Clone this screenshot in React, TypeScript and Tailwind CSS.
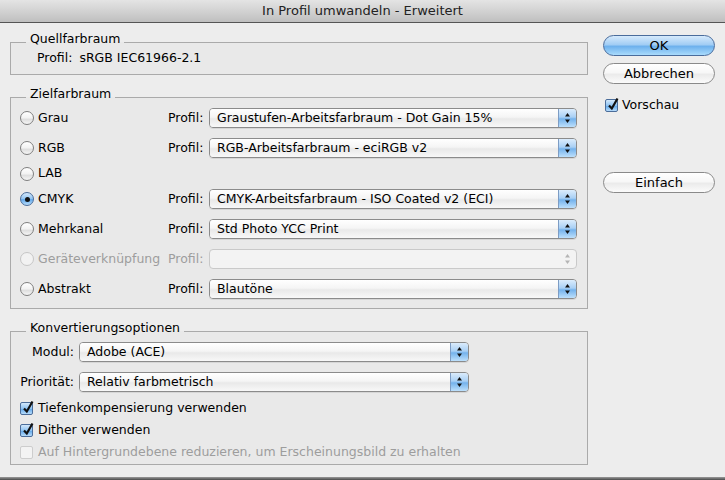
import React from "react";

function Arrows({ disabled }: { disabled?: boolean }) {
  const fill = disabled ? "#b5b5b5" : "#111";
  return (
    <svg width="5" height="10" viewBox="0 0 5 10">
      <polygon points="0,3.5 2.5,0 5,3.5" fill={fill} />
      <polygon points="0,6.5 2.5,10 5,6.5" fill={fill} />
    </svg>
  );
}

function Popup({ text, disabled, className }: { text?: string; disabled?: boolean; className: string }) {
  if (disabled) {
    return (
      <div className={`flex h-[20px] rounded-[4px] border border-[#c9c9c9] bg-[#f3f3f3] ${className}`}>
        <div className="flex-1" />
        <div className="flex w-[18px] items-center justify-center">
          <Arrows disabled />
        </div>
      </div>
    );
  }
  return (
    <div
      className={`flex h-[20px] overflow-hidden rounded-[4px] border border-[#8b8b8b] shadow-[0_1px_0_rgba(0,0,0,0.08)] ${className}`}
    >
      <div className="flex flex-1 items-center bg-[linear-gradient(180deg,#ffffff_0%,#f5f5f5_45%,#e9e9e9_55%,#f8f8f8_100%)] pl-[7px] leading-none whitespace-nowrap">
        {text}
      </div>
      <div className="flex w-[18px] items-center justify-center border-l border-[#7d9cc4] bg-[linear-gradient(180deg,#dbecfc_0%,#a9d0f5_45%,#74b2ec_55%,#bde0fc_100%)]">
        <Arrows />
      </div>
    </div>
  );
}

function Radio({ checked, disabled }: { checked?: boolean; disabled?: boolean }) {
  if (checked) {
    return (
      <div className="flex h-[14px] w-[14px] shrink-0 items-center justify-center rounded-full border border-[#4b6d9a] bg-[linear-gradient(180deg,#d3e8fb_0%,#8fc3f1_50%,#63a9ea_55%,#b7dcfb_100%)]">
        <div className="h-[5px] w-[5px] rounded-full bg-[#111]" />
      </div>
    );
  }
  return (
    <div
      className={`h-[14px] w-[14px] shrink-0 rounded-full border ${
        disabled
          ? "border-[#c6c6c6] bg-[#f2f2f2]"
          : "border-[#7f7f7f] bg-[linear-gradient(180deg,#ffffff_0%,#f2f2f2_50%,#dedede_60%,#f6f6f6_100%)]"
      }`}
    />
  );
}

function Checkbox({ checked, disabled }: { checked?: boolean; disabled?: boolean }) {
  if (checked) {
    return (
      <div className="relative h-[13px] w-[13px] shrink-0 rounded-[2px] border border-[#4b6d9a] bg-[linear-gradient(180deg,#d3e8fb_0%,#8fc3f1_50%,#63a9ea_55%,#b7dcfb_100%)]">
        <svg className="absolute left-[1px] top-[-3px]" width="12" height="14" viewBox="0 0 12 14">
          <path d="M2 8.5 L4.8 11.5 L10.5 1.5" stroke="#111" strokeWidth="2.2" fill="none" />
        </svg>
      </div>
    );
  }
  return (
    <div
      className={`h-[13px] w-[13px] shrink-0 rounded-[2px] border ${
        disabled ? "border-[#cdcdcd] bg-[#f3f3f3]" : "border-[#7f7f7f] bg-white"
      }`}
    />
  );
}

function Button({ label, primary }: { label: string; primary?: boolean }) {
  return (
    <div
      className={`flex h-[21px] w-[112px] items-center justify-center rounded-full border text-[13px] leading-none ${
        primary
          ? "border-[#4a6c9c] bg-[linear-gradient(180deg,#d6eafc_0%,#a2cdf4_45%,#6eb1ed_55%,#a9dbfc_100%)]"
          : "border-[#8a8a8a] bg-[linear-gradient(180deg,#ffffff_0%,#f7f7f7_45%,#ebebeb_55%,#fbfbfb_100%)]"
      }`}
    >
      {label}
    </div>
  );
}

const targets = [
  { name: "Grau", profile: "Graustufen-Arbeitsfarbraum - Dot Gain 15%" },
  { name: "RGB", profile: "RGB-Arbeitsfarbraum - eciRGB v2" },
  { name: "LAB" },
  { name: "CMYK", profile: "CMYK-Arbeitsfarbraum - ISO Coated v2 (ECI)", checked: true },
  { name: "Mehrkanal", profile: "Std Photo YCC Print" },
  { name: "Geräteverknüpfung", profile: "", disabled: true },
  { name: "Abstrakt", profile: "Blautöne" },
];

export default function App() {
  return (
    <div className="flex h-[480px] w-[725px] flex-col overflow-hidden bg-[#ededed] font-['DejaVu_Sans',sans-serif] text-[12.5px] text-black">
      <div className="flex h-[23px] shrink-0 items-center justify-center border-b border-[#555] bg-[linear-gradient(180deg,#e4e4e4_0%,#d2d2d2_50%,#bfbfbf_100%)] text-[13px] text-[#222]">
        In Profil umwandeln - Erweitert
      </div>

      <div className="flex flex-1 pl-[10px]">
        <div className="flex w-[578px] flex-col pt-[8px]">
          <fieldset className="border border-[#aaaaaa] bg-[#e9e9e9] pb-[8px]">
            <legend className="ml-[15px] px-[4px] pb-[7px] leading-[16px]">Quellfarbraum</legend>
            <div className="-mt-[4px] flex h-[16px] items-center gap-[7px] pl-[26px]">
              <span>Profil:</span>
              <span>sRGB IEC61966-2.1</span>
            </div>
          </fieldset>

          <fieldset className="mt-[11px] border border-[#aaaaaa] bg-[#e9e9e9] pb-[9px]">
            <legend className="ml-[15px] px-[4px] pb-[7px] leading-[16px]">Zielfarbraum</legend>
            <div className="-mt-[1px] flex flex-col gap-[10px] pl-[9px] pr-[10px]">
              {targets.map((t) => (
                <div key={t.name} className={`flex items-center ${t.profile === undefined ? "h-[11px]" : "h-[20px]"}`}>
                  <div className="flex w-[148px] items-center gap-[4px]">
                    <Radio checked={t.checked} disabled={t.disabled} />
                    <span className={`whitespace-nowrap ${t.disabled ? "text-[#9d9d9d]" : ""}`}>{t.name}</span>
                  </div>
                  {t.profile !== undefined && (
                    <>
                      <span className={`w-[41px] ${t.disabled ? "text-[#9d9d9d]" : ""}`}>Profil:</span>
                      <Popup className="w-[368px]" text={t.profile} disabled={t.disabled} />
                    </>
                  )}
                </div>
              ))}
            </div>
          </fieldset>

          <fieldset className="mt-[11px] border border-[#aaaaaa] bg-[#e9e9e9] pb-[4px]">
            <legend className="ml-[15px] px-[4px] pb-[7px] leading-[16px]">Konvertierungsoptionen</legend>
            <div className="-mt-[1px] flex flex-col pl-[9px]">
              <div className="flex h-[20px] items-center gap-[5px]">
                <span className="w-[54px] text-right">Modul:</span>
                <Popup className="w-[390px]" text="Adobe (ACE)" />
              </div>
              <div className="mt-[10px] flex h-[20px] items-center gap-[5px]">
                <span className="w-[54px] whitespace-nowrap text-right">Priorität:</span>
                <Popup className="w-[390px]" text="Relativ farbmetrisch" />
              </div>
              <div className="mt-[8px] flex h-[16px] items-center gap-[5px]">
                <Checkbox checked />
                <span>Tiefenkompensierung verwenden</span>
              </div>
              <div className="mt-[6px] flex h-[16px] items-center gap-[5px]">
                <Checkbox checked />
                <span>Dither verwenden</span>
              </div>
              <div className="mt-[6px] flex h-[16px] items-center gap-[5px]">
                <Checkbox disabled />
                <span className="text-[#9d9d9d]">Auf Hintergrundebene reduzieren, um Erscheinungsbild zu erhalten</span>
              </div>
            </div>
          </fieldset>
        </div>

        <div className="ml-[15px] flex w-[112px] flex-col pt-[12px]">
          <Button label="OK" primary />
          <div className="mt-[7px]">
            <Button label="Abbrechen" />
          </div>
          <div className="mt-[13px] flex h-[16px] items-center gap-[4px] pl-[2px]">
            <Checkbox checked />
            <span>Vorschau</span>
          </div>
          <div className="mt-[59px]">
            <Button label="Einfach" />
          </div>
        </div>
      </div>

      <div className="h-[3px] shrink-0 bg-[linear-gradient(180deg,#9a9a9a,#4a4a4a)]" />
    </div>
  );
}
